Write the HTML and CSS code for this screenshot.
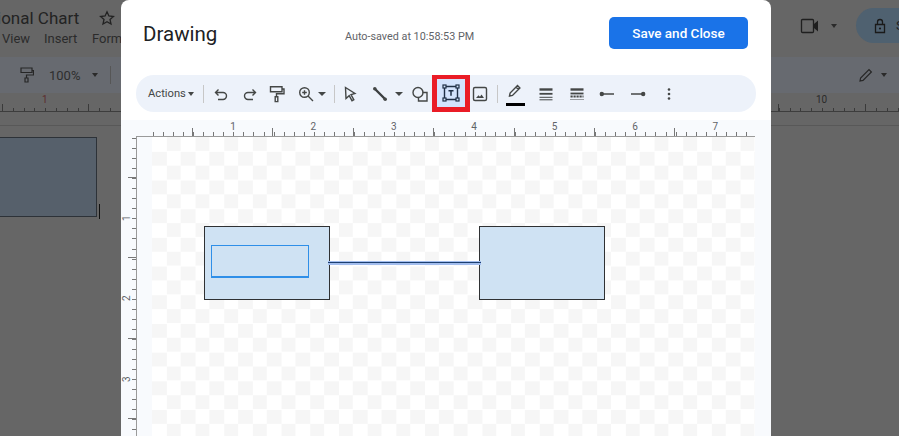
FILE: index.html
```html
<!DOCTYPE html>
<html lang="en">
<head>
<meta charset="utf-8">
<title>Drawing</title>
<link rel="stylesheet" href="styles.css">
</head>
<body>
<div class="doc">
  <div class="doc-head">
    <div class="doc-left">
      <div class="doc-title-row">
        <span class="doc-title">ional Chart</span>
        <svg class="doc-star" width="16" height="16" viewBox="0 0 16 16"><path d="M8 1.800l1.900 4.200 4.500.5-3.400 3 1 4.500L8 11.700 4 14l1-4.500-3.400-3 4.500-.5z"/></svg>
      </div>
      <div class="doc-menu"><span class="m-view">View</span><span class="m-insert">Insert</span><span>Format</span></div>
    </div>
    <div class="doc-right">
      <svg class="doc-video" width="20" height="16" viewBox="0 0 20 16"><path d="M2.500 1.500h10a1 1 0 0 1 1 1v11a1 1 0 0 1-1 1h-10a1 1 0 0 1-1-1v-11a1 1 0 0 1 1-1z"/><path class="solid" d="M14 6l4-3.500v11L14 10z"/></svg>
      <span class="caret doc-caret"></span>
      <div class="doc-share">
        <svg width="12" height="16" viewBox="0 0 12 16"><path d="M1.500 6.500h9v8h-9zM3.500 6.500V4a2.500 2.500 0 0 1 5 0v2.500"/><circle class="solid" cx="6" cy="10.500" r="1.100"/></svg>
        <span>S</span>
      </div>
    </div>
  </div>
  <div class="doc-tools">
    <svg class="doc-roller" width="14" height="16" viewBox="0 0 14 16"><path d="M1 1h11v4.500H1zM12 3.500h1.500v4.500H6.500v3M5 11h3v4H5z"/></svg>
    <span class="doc-zoom">100%</span>
    <span class="caret doc-caret-2"></span>
    <span class="doc-sep"></span>
    <span class="doc-spacer"></span>
    <svg class="doc-pen" width="14" height="14" viewBox="0 0 14 14"><path d="M1 13l.6-3L10 1.600 12.400 4 4 12.400z"/></svg>
    <span class="caret doc-caret-3"></span>
  </div>
  <div class="doc-ruler">
    <span class="doc-ruler-1">1</span>
    <span class="doc-ruler-10">10</span>
  </div>
  <div class="doc-band"></div>
  <div class="doc-canvas">
    <div class="doc-shape"></div>
    <div class="doc-cursor"></div>
  </div>
</div>

<div class="modal">
  <header class="modal-head">
    <h1 class="modal-title">Drawing</h1>
    <span class="saved">Auto-saved at 10:58:53 PM</span>
    <button class="save">Save and Close</button>
  </header>

  <div class="toolbar">
    <span class="actions">Actions<span class="caret"></span></span>
    <span class="sep s-a"></span>
    <span class="ib g4"><svg viewBox="0 0 18 18"><path d="M6.500 4.500L3.500 7.500 6.500 10.500M4 7.500h7a3.500 3.500 0 0 1 0 7H6"/></svg></span>
    <span class="ib g1"><svg viewBox="0 0 18 18"><path d="M11.500 4.500L14.500 7.500 11.500 10.500M14 7.500H7a3.500 3.500 0 0 0 0 7h5"/></svg></span>
    <span class="ib gn1"><svg viewBox="0 0 18 18"><path d="M2.500 1.800h11.500v5H2.500zM14 4h2v4.800H8.500v3M7.200 11.800h2.600v4.800H7.200z"/></svg></span>
    <span class="ib g1"><svg viewBox="0 0 18 18"><circle cx="7.500" cy="7.500" r="4.800"/><path d="M11 11l5 5M7.500 5.200v4.600M5.200 7.500h4.600"/></svg></span>
    <span class="caret c-zoom"></span>
    <span class="sep s-b"></span>
    <span class="ib g1"><svg viewBox="0 0 18 18"><path d="M4.500 2.500l9.500 6-4 1.200 2.800 5-1.800 1-2.800-5-3.200 2.800z"/></svg></span>
    <span class="ib g2"><svg viewBox="0 0 18 18"><path class="thick" d="M4 4l10 10"/><circle class="solid" cx="3.800" cy="3.800" r="1.800"/><circle class="solid" cx="14.200" cy="14.200" r="1.800"/></svg></span>
    <span class="caret c-line"></span>
    <span class="ib g3"><svg viewBox="0 0 18 18"><circle cx="7" cy="7.500" r="5"/><path d="M11.500 7.500h4.500v8.500H7.500v-3.500"/></svg></span>
    <span class="ib-hl"><svg viewBox="0 0 18 18"><path d="M3.500 2.500h11M3.500 15.500h11M2.500 3.500v11M15.500 3.500v11"/><g class="nodes"><rect x="1" y="1" width="3" height="3"/><rect x="14" y="1" width="3" height="3"/><rect x="1" y="14" width="3" height="3"/><rect x="14" y="14" width="3" height="3"/></g><path class="t" d="M6.500 6.800h5M9 6.800v5"/></svg></span>
    <span class="ib gn4"><svg viewBox="0 0 18 18"><rect x="2.500" y="2.500" width="13" height="13" rx="1.500"/><path class="solid" d="M5 13l2.500-2.800 1.500 1.500 1.500-2.200 2.500 3.500z"/></svg></span>
    <span class="sep s-c"></span>
    <span class="ib g3 pen"><svg viewBox="0 0 18 18"><path d="M3.500 14l.6-3 7.400-7.400 2.400 2.400-7.400 7.400zM10 5l2.400 2.400"/></svg><span class="pen-bar"></span></span>
    <span class="ib g3"><svg viewBox="0 0 18 18"><path class="w3" d="M2.500 4.500h13"/><path class="w2" d="M2.500 8.800h13"/><path class="w1" d="M2.500 12.300h13"/><path class="w1" d="M2.500 14.800h13"/></svg></span>
    <span class="ib g3"><svg viewBox="0 0 18 18"><path class="w3" d="M2.500 4.500h13"/><path class="w2" d="M2.500 8.500h13"/><path class="w2 dash" d="M2.500 11.500h13"/><path class="w1 dot" d="M2.500 14.500h13"/></svg></span>
    <span class="ib g2"><svg viewBox="0 0 18 18"><path class="wa" d="M3 9h13"/><circle class="solid" cx="3.800" cy="9" r="2.200"/></svg></span>
    <span class="ib g3"><svg viewBox="0 0 18 18"><path class="wa" d="M2 9h13"/><circle class="solid" cx="14.200" cy="9" r="2.200"/></svg></span>
    <span class="ib g3"><svg viewBox="0 0 18 18"><circle class="solid" cx="9" cy="4.500" r="1.300"/><circle class="solid" cx="9" cy="9" r="1.300"/><circle class="solid" cx="9" cy="13.500" r="1.300"/></svg></span>
  </div>

  <div class="stage">
    <div class="h-ruler">
      <span>1</span><span>2</span><span>3</span><span>4</span><span>5</span><span>6</span><span>7</span>
    </div>
    <div class="stage-body">
      <div class="v-ruler">
        <span>1</span><span>2</span><span>3</span>
      </div>
      <div class="canvas">
        <div class="box box-a"></div>
        <div class="box box-b"></div>
        <div class="textbox"></div>
        <div class="connector"></div>
      </div>
    </div>
  </div>
</div>
</body>
</html>
```

FILE: styles.css
```css
* { box-sizing: border-box; }
html, body { margin: 0; padding: 0; height: 436px; overflow: hidden; }
body { position: relative; width: 899px; background: #666; font-family: Roboto, "Liberation Sans", sans-serif; }

/* dimmed document behind the dialog */
.doc { display: flex; flex-direction: column; height: 436px; color: #252525; background: #666; }
.doc-head { display: flex; justify-content: space-between; height: 57px; }
.doc-left { display: flex; flex-direction: column; }
.doc-title-row { display: flex; align-items: center; height: 31px; padding-top: 5px; margin-left: -3px; }
.doc-title { font-size: 17px; line-height: 24px; color: #232323; }
.doc-star { margin-left: 20px; fill: none; stroke: #222; stroke-width: 1.300; }
.doc-menu { display: flex; font-size: 13px; line-height: 16px; margin-left: 2px; color: #2b2b2b; white-space: nowrap; }
.m-view { width: 42px; }
.m-insert { width: 48px; }
.doc-right { display: flex; align-items: flex-start; padding-top: 8px; }
.doc-video { margin-top: 10px; fill: none; stroke: #1f1f1f; stroke-width: 1.300; }
.doc-video .solid { fill: #1f1f1f; stroke: none; }
.doc-caret { margin: 16px 0 0 11px; }
.doc-share { display: flex; align-items: center; gap: 10px; width: 60px; height: 35px; margin-left: 19px; padding-left: 18px; background: #4f6170; border-radius: 18px 0 0 18px; font-size: 13px; color: #1f1f1f; margin-right: -17px; }
.doc-share svg { fill: none; stroke: #1a1a1a; stroke-width: 1.300; flex: none; }
.doc-share .solid { fill: #1a1a1a; stroke: none; }
.doc-tools { display: flex; align-items: center; height: 36px; background: #676a70; padding-left: 20px; }
.doc-roller { fill: none; stroke: #262626; stroke-width: 1.200; }
.doc-zoom { margin-left: 15px; font-size: 13px; color: #2e2e2e; }
.doc-caret-2 { margin-left: 12px; }
.doc-sep { width: 1px; height: 18px; background: #565656; margin-left: 12px; }
.doc-spacer { flex: 1; }
.doc-pen { fill: none; stroke: #262626; stroke-width: 1.200; }
.doc-caret-3 { margin: 0 12px 0 8px; }
.doc-ruler { position: relative; height: 19px; border-bottom: 1px solid #3d3d3d; font-size: 10px; color: #2a2a2a;
  background:
    repeating-linear-gradient(90deg, #3a3a3a 0 1px, transparent 1px 10.790px) 2px 100% / 100% 3px no-repeat,
    repeating-linear-gradient(90deg, transparent 0 1.700px, #3a3a3a 1.700px 2.700px, transparent 2.700px 86.300px) 0 100% / 100% 7px no-repeat; }
.doc-ruler span { position: absolute; top: 1px; line-height: 12px; }
.doc-ruler-1 { left: 42px; color: #5c2d2d; }
.doc-ruler-10 { left: 816px; }
.doc-band { height: 14px; border-bottom: 1px solid #585858; }
.doc-canvas { position: relative; flex: 1; }
.doc-shape { position: absolute; left: -2px; top: 11px; width: 99px; height: 80px; background: #56606b; border: 1px solid #2d3238; }
.doc-cursor { position: absolute; left: 99px; top: 78px; width: 1px; height: 15px; background: #111; }

/* dialog */
.modal { position: absolute; left: 121px; top: 0; width: 650px; height: 436px; background: #fff; border-radius: 8px 8px 0 0; display: flex; flex-direction: column; overflow: hidden; }
.modal-head { display: flex; align-items: flex-start; height: 75px; padding: 17px 23px 0 22px; }
.modal-title { margin: 4px 0 0; font-size: 20.500px; line-height: 26px; font-weight: 400; color: #202124; width: 202px; }
.saved { margin-top: 13px; font-size: 10.800px; line-height: 14px; color: #5f6368; width: 264px; white-space: nowrap; }
.save { width: 139px; height: 32px; border: 0; border-radius: 5px; background: #1a73e8; color: #fff; font: 500 13.500px/31px Roboto, "Liberation Sans", sans-serif; padding: 0; }

.toolbar { display: flex; align-items: center; width: 620px; height: 37px; margin-left: 15px; padding-left: 12px; background: #edf2fa; border-radius: 18px; flex: none; }
.actions { display: flex; align-items: center; width: 49px; font-size: 11.200px; color: #444746; }
.actions .caret { margin-left: 2px; }
.caret { display: inline-block; width: 0; height: 0; border-left: 4px solid transparent; border-right: 4px solid transparent; border-top: 4px solid #444746; flex: none; }
.actions .caret { border-left-width: 3.500px; border-right-width: 3.500px; }
.doc .caret { border-top-color: #2a2a2a; border-left-width: 3.500px; border-right-width: 3.500px; }
.sep { width: 1px; height: 18px; background: #c7c7c7; flex: none; }
.s-a { margin: 0 3px 0 6px; }
.s-b { margin-left: 8px; }
.s-c { margin-left: 3px; }
.ib, .ib-hl { display: flex; align-items: center; justify-content: center; flex: none; height: 29px; position: relative; }
.ib { width: 28px; }
.ib svg, .ib-hl svg { width: 18px; height: 18px; fill: none; stroke: #444746; stroke-width: 1.400; }
.g1 { margin-left: 1px; }
.g2 { margin-left: 2px; }
.g3 { margin-left: 3px; }
.g4 { margin-left: 0; }
.gn1 { margin-left: -1px; }
.gn4 { margin-left: -4px; }
.c-zoom { margin-left: -2px; }
.c-line { margin-left: 1px; }
.ib-hl { width: 38px; height: 37px; margin-left: -2px; background: #d3e3fd; border: 5px solid #ea1c26; border-width: 4px 5px 5px; z-index: 1; }
.ib-hl svg { stroke: #1f2f46; }
.ib-hl .nodes rect { fill: #d3e3fd; stroke-width: 1.200; }
.ib-hl svg .t { stroke-width: 1.500; }
.ib svg .solid { fill: #444746; stroke: none; }
.ib svg .thick { stroke-width: 2.400; stroke: #3c3f41; }
.ib svg .w1 { stroke-width: 1; }
.ib svg .w2 { stroke-width: 1.800; }
.ib svg .w3 { stroke-width: 2.400; }
.ib svg .wa { stroke-width: 1.500; }
.ib svg .dash { stroke-dasharray: 2.200 .8; }
.ib svg .dot { stroke-dasharray: 1 1; }
.pen svg { margin-top: -5px; }
.pen-bar { position: absolute; left: 5px; top: 24px; width: 19px; height: 3px; background: #000; }

.stage { flex: 1; margin-top: 8px; background: #f8fafd; display: flex; flex-direction: column; min-height: 0; }
.h-ruler { display: flex; width: 619px; height: 17px; margin-left: 15px; padding-left: 56.800px; flex: none; border-bottom: 1px solid #9a9a9a; font-size: 10px; line-height: 14px; color: #5f6368;
  background:
    repeating-linear-gradient(90deg, #777 0 1px, transparent 1px 10.050px) 17px 100% / 600px 4px no-repeat,
    repeating-linear-gradient(90deg, #777 0 1px, transparent 1px 80.400px) 56px 100% / 560px 8px no-repeat; }
.h-ruler span { flex: none; width: 80.400px; text-align: center; }
.stage-body { display: flex; flex: 1; min-height: 0; }
.v-ruler { display: flex; flex-direction: column; width: 16px; flex: none; padding-top: 40.800px; border-right: 1px solid #9a9a9a; font-size: 10px; color: #5f6368;
  background:
    repeating-linear-gradient(180deg, #777 0 1px, transparent 1px 10.050px) 100% 1px / 4px 100% no-repeat,
    repeating-linear-gradient(180deg, #777 0 1px, transparent 1px 80.400px) 100% 40px / 8px 100% no-repeat; }
.v-ruler span { flex: none; height: 80.400px; width: 10px; display: flex; align-items: center; justify-content: center; transform: rotate(-90deg); }
.canvas { position: relative; flex: none; width: 603px; margin-left: 15px; background: conic-gradient(#f6f6f6 25%, #fff 0 50%, #f6f6f6 0 75%, #fff 0) 0 0 / 28.700px 28.700px; }
.box { position: absolute; top: 89px; width: 126px; height: 74px; background: #cfe2f3; border: 1px solid #2f3133; }
.box-a { left: 52px; }
.box-b { left: 327px; }
.textbox { position: absolute; left: 59px; top: 108px; width: 98px; height: 33px; border: 1px solid #2f8fe8; border-bottom-width: 2px; }
.connector { position: absolute; left: 176px; top: 124px; width: 153px; height: 4px; background: linear-gradient(#a2bdee 0 1px, #1c3f70 1px 2px, #a2bdee 2px); }
```
